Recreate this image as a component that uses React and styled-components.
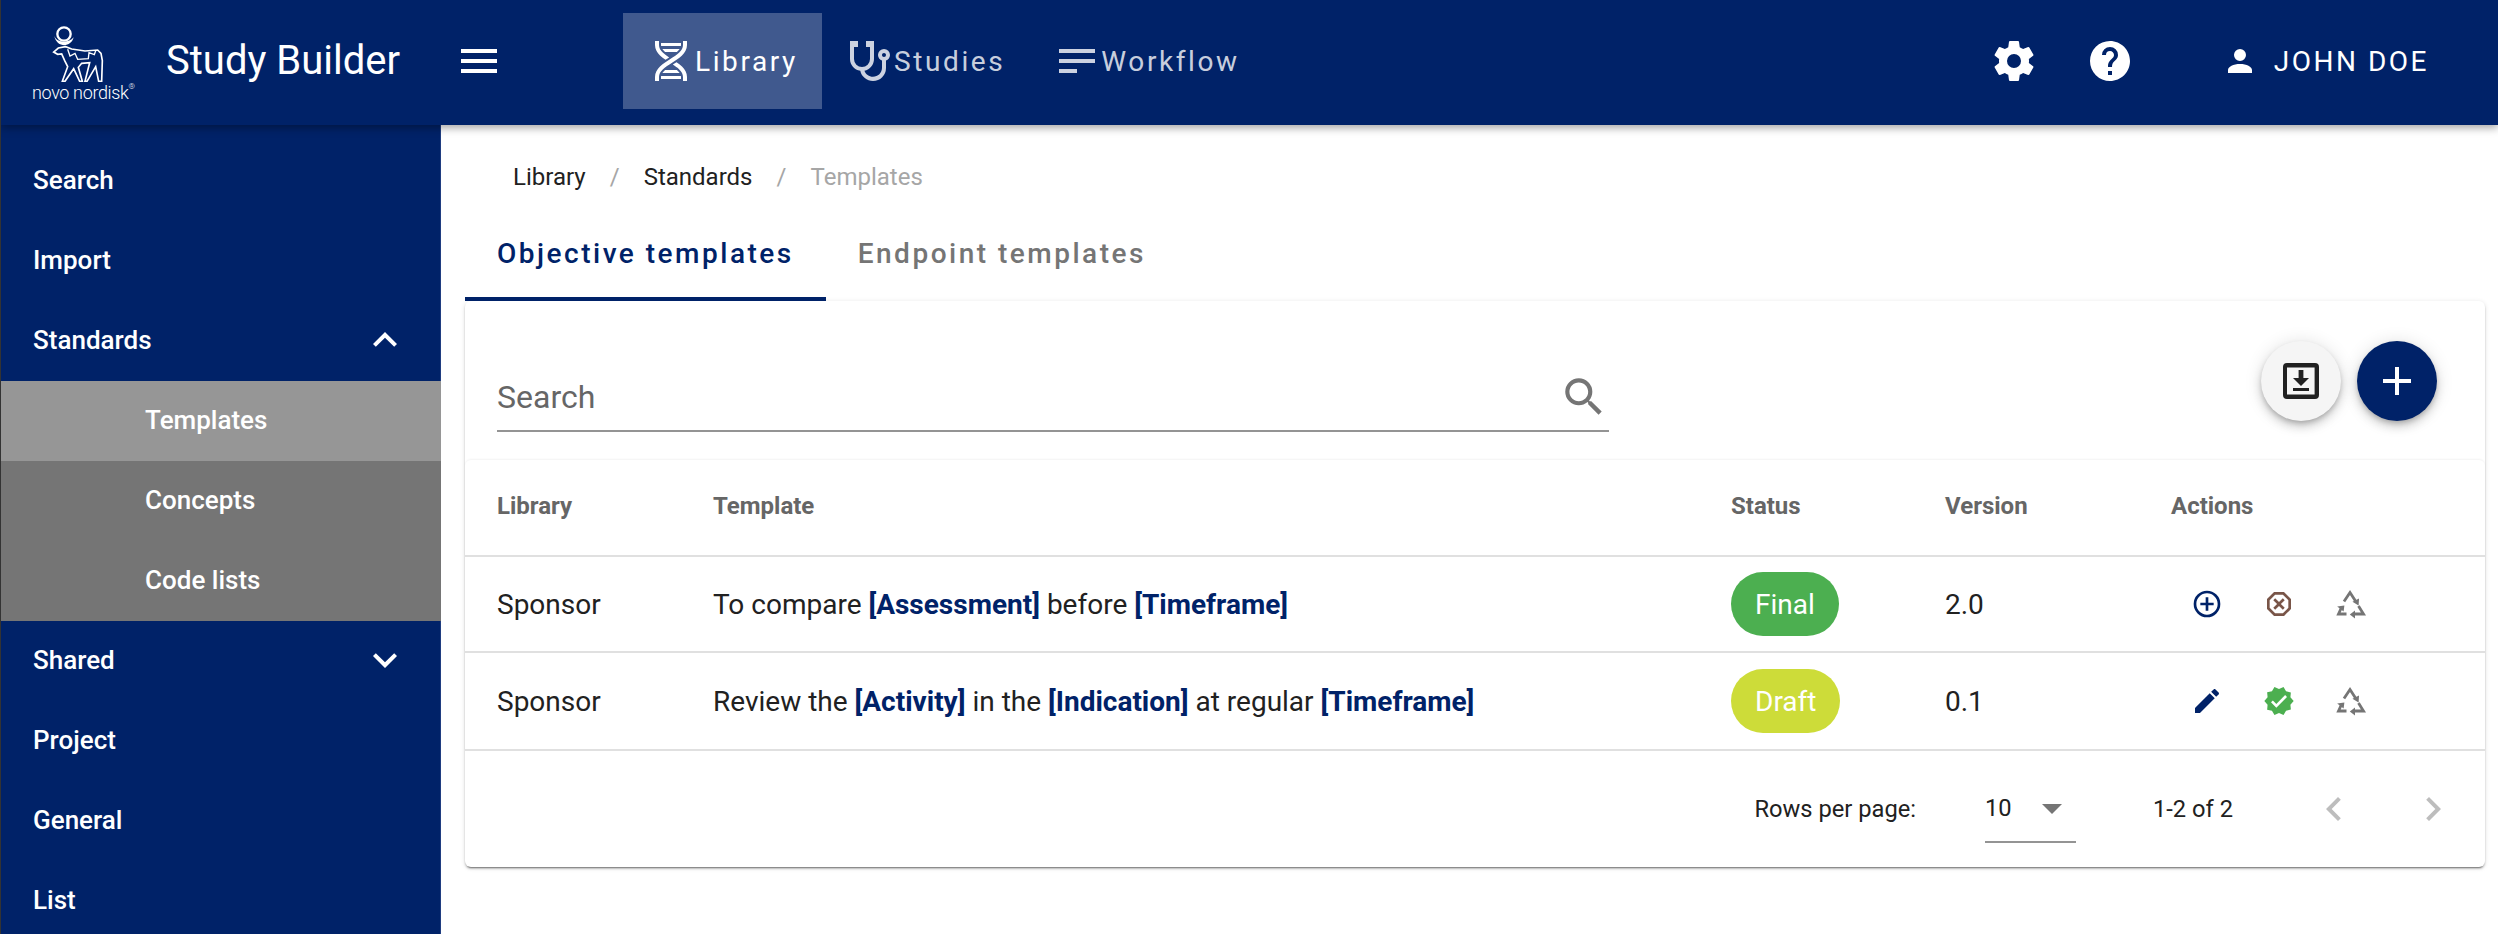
import React from "react";
import styled, { createGlobalStyle } from "styled-components";

const NAVY = "#002268";

const icons = {
  menu: "M3,6H21V8H3V6M3,11H21V13H3V11M3,16H21V18H3V16Z",
  dna: "M4,2H6V4C6,5.44 6.68,6.61 7.88,7.78C8.74,8.61 9.89,9.41 11.09,10.2L9.26,11.39C8.27,10.72 7.31,10 6.5,9.21C5.07,7.82 4,6.1 4,4V2M18,2H20V4C20,6.1 18.93,7.82 17.5,9.21C16.09,10.59 14.29,11.73 12.54,12.84C10.79,13.96 9.09,15.05 7.88,16.22C6.68,17.39 6,18.56 6,20V22H4V20C4,17.9 5.07,16.18 6.5,14.79C7.91,13.41 9.71,12.27 11.46,11.16C13.21,10.04 14.91,8.95 16.12,7.78C17.32,6.61 18,5.44 18,4V2M14.74,12.61C15.73,13.28 16.69,14 17.5,14.79C18.93,16.18 20,17.9 20,20V22H18V20C18,18.56 17.32,17.39 16.12,16.22C15.26,15.39 14.11,14.59 12.91,13.8L14.74,12.61M7,3H17V4L16.94,4.5H7.06L7,4V3M7.68,6H16.32C16.08,6.34 15.8,6.69 15.42,7.06L14.98,7.5H9.02L8.58,7.06C8.2,6.69 7.92,6.34 7.68,6M9.02,16.5H14.98L15.42,16.94C15.8,17.31 16.08,17.66 16.32,18H7.68C7.92,17.66 8.2,17.31 8.58,16.94L9.02,16.5M7.06,19.5H16.94L17,20V21H7V20L7.06,19.5Z",
  stethoscope: "M19,8C19.56,8 20,8.43 20,9A1,1 0 0,1 19,10C18.43,10 18,9.55 18,9C18,8.43 18.43,8 19,8M2,2V11C2,13.96 4.19,16.5 7.14,16.91C7.76,19.92 10.42,22 13.5,22A6.5,6.5 0 0,0 20,15.5V11.81C21.16,11.39 22,10.29 22,9A3,3 0 0,0 19,6A3,3 0 0,0 16,9C16,10.29 16.84,11.4 18,11.81V15.41C18,17.91 16,19.91 13.5,19.91C11.5,19.91 9.82,18.7 9.22,16.9C12,16.3 14,13.8 14,11V2H10V5H12V11A4,4 0 0,1 8,15A4,4 0 0,1 4,11V5H6V2H2Z",
  text: "M21,6V8H3V6H21M3,18H12V16H3V18M3,13H21V11H3V13Z",
  cog: "M12,15.5A3.5,3.5 0 0,1 8.5,12A3.5,3.5 0 0,1 12,8.5A3.5,3.5 0 0,1 15.5,12A3.5,3.5 0 0,1 12,15.5M19.43,12.97C19.47,12.65 19.5,12.33 19.5,12C19.5,11.67 19.47,11.34 19.43,11L21.54,9.37C21.73,9.22 21.78,8.95 21.66,8.73L19.66,5.27C19.54,5.05 19.27,4.96 19.05,5.05L16.56,6.05C16.04,5.66 15.5,5.32 14.87,5.07L14.5,2.42C14.46,2.18 14.25,2 14,2H10C9.75,2 9.54,2.18 9.5,2.42L9.13,5.07C8.5,5.32 7.96,5.66 7.44,6.05L4.95,5.05C4.73,4.96 4.46,5.05 4.34,5.27L2.34,8.73C2.21,8.95 2.27,9.22 2.46,9.37L4.57,11C4.53,11.34 4.5,11.67 4.5,12C4.5,12.33 4.53,12.65 4.57,12.97L2.46,14.63C2.27,14.78 2.21,15.05 2.34,15.27L4.34,18.73C4.46,18.95 4.73,19.03 4.95,18.95L7.44,17.94C7.96,18.34 8.5,18.68 9.13,18.93L9.5,21.58C9.54,21.82 9.75,22 10,22H14C14.25,22 14.46,21.82 14.5,21.58L14.87,18.93C15.5,18.67 16.04,18.34 16.56,17.94L19.05,18.95C19.27,19.03 19.54,18.95 19.66,18.73L21.66,15.27C21.78,15.05 21.73,14.78 21.54,14.63L19.43,12.97Z",
  help: "M15.07,11.25L14.17,12.17C13.45,12.89 13,13.5 13,15H11V14.5C11,13.39 11.45,12.39 12.17,11.67L13.41,10.41C13.78,10.05 14,9.55 14,9C14,7.89 13.1,7 12,7A2,2 0 0,0 10,9H8A4,4 0 0,1 12,5A4,4 0 0,1 16,9C16,9.88 15.64,10.67 15.07,11.25M13,19H11V17H13M12,2A10,10 0 0,0 2,12A10,10 0 0,0 12,22C17.53,22 22,17.5 22,12C22,6.47 17.5,2 12,2Z",
  account: "M12,4A4,4 0 0,1 16,8A4,4 0 0,1 12,12A4,4 0 0,1 8,8A4,4 0 0,1 12,4M12,14C16.42,14 20,15.79 20,18V20H4V18C4,15.79 7.58,14 12,14Z",
  chevronUp: "M7.41,15.41L12,10.83L16.59,15.41L18,14L12,8L6,14L7.41,15.41Z",
  chevronDown: "M7.41,8.58L12,13.17L16.59,8.58L18,10L12,16L6,10L7.41,8.58Z",
  chevronLeft: "M15.41,16.58L10.83,12L15.41,7.41L14,6L8,12L14,18L15.41,16.58Z",
  chevronRight: "M8.59,16.58L13.17,12L8.59,7.41L10,6L16,12L10,18L8.59,16.58Z",
  magnify: "M9.5,3A6.5,6.5 0 0,1 16,9.5C16,11.11 15.41,12.59 14.44,13.73L14.71,14H15.5L20.5,19L19,20.5L14,15.5V14.71L13.73,14.44C12.59,15.41 11.11,16 9.5,16A6.5,6.5 0 0,1 3,9.5A6.5,6.5 0 0,1 9.5,3M9.5,5C7,5 5,7 5,9.5C5,12 7,14 9.5,14C12,14 14,12 14,9.5C14,7 12,5 9.5,5Z",
  downloadBox: "M5,3H19A2,2 0 0,1 21,5V19A2,2 0 0,1 19,21H5A2,2 0 0,1 3,19V5A2,2 0 0,1 5,3M5,5.2V18.8H18.8V5.2H5M8,15.5H16V17H8V15.5M12,14.5L8,10.5H10.8V6.5H13.2V10.5H16L12,14.5Z",
  plus: "M19,13H13V19H11V13H5V11H11V5H13V11H19V13Z",
  plusCircle: "M12,20C7.59,20 4,16.41 4,12C4,7.59 7.59,4 12,4C16.41,4 20,7.59 20,12C20,16.41 16.41,20 12,20M12,2A10,10 0 0,0 2,12A10,10 0 0,0 12,22A10,10 0 0,0 22,12A10,10 0 0,0 12,2M13,7H11V11H7V13H11V17H13V13H17V11H13V7Z",
  closeOctagon: "M8.27,3L3,8.27V15.73L8.27,21H15.73C17.5,19.24 21,15.73 21,15.73V8.27L15.73,3M9.1,5H14.9L19,9.1V14.9L14.9,19H9.1L5,14.9V9.1M9.12,7.71L7.71,9.12L10.59,12L7.71,14.88L9.12,16.29L12,13.41L14.88,16.29L16.29,14.88L13.41,12L16.29,9.12L14.88,7.71L12,10.59",
  pencil: "M20.71,7.04C21.1,6.65 21.1,6 20.71,5.63L18.37,3.29C18,2.9 17.35,2.9 16.96,3.29L15.12,5.12L18.87,8.87M3,17.25V21H6.75L17.81,9.93L14.06,6.18L3,17.25Z",
  decagram: "M23,12L20.56,9.22L20.9,5.54L17.29,4.72L15.4,1.54L12,3L8.6,1.54L6.71,4.72L3.1,5.53L3.44,9.21L1,12L3.44,14.78L3.1,18.47L6.71,19.29L8.6,22.47L12,21L15.4,22.46L17.29,19.28L20.9,18.46L20.56,14.78L23,12M10,17L6,13L7.41,11.59L10,14.17L16.59,7.58L18,9L10,17Z",
  menuDown: "M7,10L12,15L17,10H7Z",
};

function App() {
  return (
    <Page>
      <GlobalStyle />
      {/* header */}
      <Header>
        <Brand>
          <BullLogo />
          <BrandName>
            novo nordisk<sup>®</sup>
          </BrandName>
        </Brand>
        <Title>Study Builder</Title>
        <MenuIcon>
          <Icon d={icons.menu} $size={48} />
        </MenuIcon>
        <TopNav>
          <TopNavButton $active>
            <Icon d={icons.dna} $size={48} />
            Library
          </TopNavButton>
          <TopNavButton>
            <Icon d={icons.stethoscope} $size={48} />
            Studies
          </TopNavButton>
          <TopNavButton>
            <Icon d={icons.text} $size={48} />
            Workflow
          </TopNavButton>
        </TopNav>
        <HeaderRight>
          <Icon d={icons.cog} $size={48} />
          <Icon d={icons.help} $size={48} />
          <UserButton>
            <Icon d={icons.account} $size={36} />
            JOHN DOE
          </UserButton>
        </HeaderRight>
      </Header>

      <Body>
        {/* sidebar */}
        <Sidebar>
          <SideItem>Search</SideItem>
          <SideItem>Import</SideItem>
          <SideItem>
            Standards
            <Icon d={icons.chevronUp} $size={48} />
          </SideItem>
          <SubItem $active>Templates</SubItem>
          <SubItem>Concepts</SubItem>
          <SubItem>Code lists</SubItem>
          <SideItem>
            Shared
            <Icon d={icons.chevronDown} $size={48} />
          </SideItem>
          <SideItem>Project</SideItem>
          <SideItem>General</SideItem>
          <SideItem>List</SideItem>
        </Sidebar>

        {/* main */}
        <Main>
          <Breadcrumbs>
            <Crumb>Library</Crumb>
            <CrumbSep>/</CrumbSep>
            <Crumb>Standards</Crumb>
            <CrumbSep>/</CrumbSep>
            <Crumb $current>Templates</Crumb>
          </Breadcrumbs>
          <Tabs>
            <Tab $active>Objective templates</Tab>
            <Tab>Endpoint templates</Tab>
          </Tabs>
          <Card>
            <Toolbar>
              <SearchField>
                <input placeholder="Search" />
                <Icon d={icons.magnify} $size={50} />
              </SearchField>
              <FabGroup>
                <Fab>
                  <Icon d={icons.downloadBox} $size={48} />
                </Fab>
                <Fab $primary>
                  <Icon d={icons.plus} $size={48} />
                </Fab>
              </FabGroup>
            </Toolbar>
            <Table>
              <HeadRow>
                <span>Library</span>
                <span>Template</span>
                <span>Status</span>
                <span>Version</span>
                <span>Actions</span>
              </HeadRow>
              <Row $height={94}>
                <span>Sponsor</span>
                <span>
                  To compare <Param>[Assessment]</Param> before <Param>[Timeframe]</Param>
                </span>
                <Chip $color="#4caf50">Final</Chip>
                <span>2.0</span>
                <Actions>
                  <ActionIcon d={icons.plusCircle} $color={NAVY} />
                  <ActionIcon d={icons.closeOctagon} $color="#795548" />
                  <RecycleIcon />
                </Actions>
              </Row>
              <Row $height={96}>
                <span>Sponsor</span>
                <span>
                  Review the <Param>[Activity]</Param> in the <Param>[Indication]</Param> at regular{" "}
                  <Param>[Timeframe]</Param>
                </span>
                <Chip $color="#cddc39">Draft</Chip>
                <span>0.1</span>
                <Actions>
                  <ActionIcon d={icons.pencil} $color={NAVY} />
                  <ActionIcon d={icons.decagram} $color="#4caf50" />
                  <RecycleIcon />
                </Actions>
              </Row>
            </Table>
            <Pagination>
              <PageText>Rows per page:</PageText>
              <RowsSelect>
                10
                <Icon d={icons.menuDown} $size={48} />
              </RowsSelect>
              <PageText>1-2 of 2</PageText>
              <PageArrows>
                <Icon d={icons.chevronLeft} $size={48} />
                <Icon d={icons.chevronRight} $size={48} />
              </PageArrows>
            </Pagination>
          </Card>
        </Main>
      </Body>
    </Page>
  );
}

function Icon({ d, $size, ...rest }) {
  return (
    <IconSvg viewBox="0 0 24 24" $size={$size} {...rest}>
      <path d={d} />
    </IconSvg>
  );
}

function ActionIcon({ d, $color }) {
  return (
    <ActionBox $color={$color}>
      <Icon d={d} $size={32} />
    </ActionBox>
  );
}

function RecycleIcon() {
  return (
    <ActionBox $color="#757575">
      <svg width="44" height="44" viewBox="0 0 44 44">
        <g fill="none" stroke="currentColor" strokeWidth="2.8">
          <path d="M15 19.5 L21 10.5 L26.5 19" />
          <path d="M17.5 32 H9.5 L12.5 25.5" />
          <path d="M29.5 24 L34.5 32 H25" />
        </g>
        <g fill="currentColor">
          <path d="M23.5 19.8 L30 16.5 L29.6 23.4 Z" />
          <path d="M8.2 24.6 L15.4 23.6 L14.6 29.6 Z" />
          <path d="M20.8 32.6 L26 28.6 L26 36.6 Z" />
        </g>
      </svg>
    </ActionBox>
  );
}

function BullLogo() {
  return (
    <svg width="115" height="62" viewBox="0 0 345 186">
      <g fill="none" stroke="#fff">
        <circle cx="117" cy="42" r="20" strokeWidth="7" />
        <path
          d="M122 80 L100 84 L86 96 L98 103 L110 102 L119 122 L128 140 L112 184 L120 184 L146 146 L164 184 L172 184 L160 142 L170 130 L194 128 L180 184 L186 184 L212 140 L221 184 L230 184 L232 122 L228 100 L218 90 L180 93 L140 87 Z"
          strokeWidth="5"
        />
        <path d="M128 88 L135 108 L150 100 L158 118 L190 116 L192 98 L208 104 L212 92" strokeWidth="4" />
      </g>
      <path d="M88 48 C95 68 130 72 146 52 C138 84 95 84 88 48 Z" fill="#fff" />
    </svg>
  );
}

const GlobalStyle = createGlobalStyle`
  html, body {
    margin: 0;
    padding: 0;
    background: #fff;
  }
  * {
    box-sizing: border-box;
  }
`;

const Page = styled.div`
  width: 2498px;
  height: 934px;
  overflow: hidden;
  display: flex;
  flex-direction: column;
  font-family: Roboto, "Liberation Sans", sans-serif;
  border-left: 1px solid #333;
`;

const IconSvg = styled.svg`
  width: ${(p) => p.$size}px;
  height: ${(p) => p.$size}px;
  flex: none;
  fill: currentColor;
`;

//header
const Header = styled.header`
  height: 125px;
  flex: none;
  display: flex;
  align-items: center;
  padding-bottom: 3px;
  background: ${NAVY};
  color: #fff;
  position: relative;
  z-index: 2;
  box-shadow: 0 3px 8px rgba(0, 0, 0, 0.35);
`;

const Brand = styled.div`
  align-self: flex-start;
  width: 165px;
  padding: 20px 0 0 24px;
  flex: none;
`;

const BrandName = styled.div`
  font-size: 18px;
  font-weight: 300;
  line-height: 20px;
  letter-spacing: -0.35px;
  margin: -3px 0 0 7px;
  white-space: nowrap;
  sup {
    font-size: 8px;
    line-height: 0;
    vertical-align: 10px;
  }
`;

const Title = styled.div`
  font-size: 40px;
  line-height: 48px;
  width: 289px;
  flex: none;
`;

const MenuIcon = styled.div`
  display: flex;
  width: 168px;
  flex: none;
`;

const TopNav = styled.nav`
  display: flex;
  height: 96px;
`;

const TopNavButton = styled.div`
  display: flex;
  align-items: center;
  padding: 0 24px;
  font-size: 28px;
  font-weight: 400;
  letter-spacing: 2.6px;
  color: ${(p) => (p.$active ? "#fff" : "rgba(255, 255, 255, 0.8)")};
  background: ${(p) => (p.$active ? "rgba(255, 255, 255, 0.25)" : "transparent")};
`;

const HeaderRight = styled.div`
  margin-left: auto;
  display: flex;
  align-items: center;
  gap: 48px;
  padding-right: 69px;
`;

const UserButton = styled.div`
  display: flex;
  align-items: center;
  gap: 16px;
  margin-left: 40px;
  font-size: 28px;
  font-weight: 400;
  letter-spacing: 2.5px;
`;

//sidebar
const Body = styled.div`
  flex: 1;
  display: flex;
  min-height: 0;
`;

const Sidebar = styled.aside`
  width: 440px;
  flex: none;
  padding-top: 16px;
  background: ${NAVY};
  box-shadow: inset -1px 0 0 #1f3d80;
  color: #fff;
`;

const SideItem = styled.div`
  height: 80px;
  padding-bottom: 2px;
  display: flex;
  align-items: center;
  justify-content: space-between;
  padding-left: 32px;
  padding-right: 32px;
  font-size: 26px;
  font-weight: 500;
`;

const SubItem = styled.div`
  height: 80px;
  padding-bottom: 2px;
  display: flex;
  align-items: center;
  padding-left: 144px;
  font-size: 26px;
  font-weight: 500;
  background: ${(p) => (p.$active ? "#969696" : "#757575")};
`;

//main
const Main = styled.main`
  flex: 1;
  min-width: 0;
  padding: 0 13px 0 24px;
`;

const Breadcrumbs = styled.div`
  display: flex;
  height: 82px;
  padding: 36px 0 14px 48px;
  font-size: 24px;
  line-height: 32px;
`;

const Crumb = styled.span`
  color: ${(p) => (p.$current ? "#a6a6a6" : "#212121")};
`;

const CrumbSep = styled.span`
  width: 58px;
  text-align: center;
  color: #a6a6a6;
`;

const Tabs = styled.div`
  display: flex;
  height: 94px;
`;

const Tab = styled.div`
  position: relative;
  display: flex;
  align-items: center;
  padding: 0 32px 2px;
  font-size: 28px;
  font-weight: 500;
  letter-spacing: 2.5px;
  color: ${(p) => (p.$active ? NAVY : "#757575")};
  ${(p) =>
    p.$active &&
    `&::after {
      content: "";
      position: absolute;
      left: 0;
      right: 0;
      bottom: 0;
      height: 4px;
      background: ${NAVY};
    }`}
`;

const Card = styled.section`
  height: 566px;
  border-radius: 6px;
  background: #fff;
  box-shadow: 0 3px 1px -2px rgba(0, 0, 0, 0.3), 0 2px 2px 0 rgba(0, 0, 0, 0.2),
    0 1px 5px 0 rgba(0, 0, 0, 0.12);
`;

const Toolbar = styled.div`
  height: 159px;
  display: flex;
  justify-content: space-between;
  padding: 0 48px 0 32px;
`;

const SearchField = styled.label`
  width: 1112px;
  height: 60px;
  margin-top: 71px;
  padding-bottom: 8px;
  display: flex;
  align-items: center;
  border-bottom: 2px solid #949494;
  color: #757575;
  input {
    flex: 1;
    min-width: 0;
    height: 100%;
    padding: 0;
    border: 0;
    outline: none;
    background: transparent;
    font: inherit;
    font-size: 32px;
  }
  input::placeholder {
    color: #666;
    opacity: 1;
  }
`;

const FabGroup = styled.div`
  display: flex;
  gap: 16px;
  margin-top: 40px;
`;

const Fab = styled.div`
  width: 80px;
  height: 80px;
  border-radius: 50%;
  display: flex;
  align-items: center;
  justify-content: center;
  background: ${(p) => (p.$primary ? NAVY : "#f5f5f5")};
  color: ${(p) => (p.$primary ? "#fff" : "#212121")};
  box-shadow: 0 3px 5px -1px rgba(0, 0, 0, 0.2), 0 6px 10px 0 rgba(0, 0, 0, 0.14),
    0 1px 18px 0 rgba(0, 0, 0, 0.12);
`;

//table
const Table = styled.div`
  border-radius: 6px 6px 0 0;
  box-shadow: 0 -1px 2px rgba(0, 0, 0, 0.05);
`;

const HeadRow = styled.div`
  display: grid;
  grid-template-columns: 216px 1018px 214px 226px 1fr;
  align-items: center;
  height: 97px;
  padding: 0 0 3px 32px;
  border-bottom: 2px solid #e0e0e0;
  font-size: 24px;
  font-weight: 700;
  color: #666;
`;

const Row = styled.div`
  display: grid;
  grid-template-columns: 216px 1018px 214px 226px 1fr;
  align-items: center;
  height: ${(p) => p.$height + 2}px;
  padding-left: 32px;
  border-bottom: 2px solid #e0e0e0;
  font-size: 28px;
  color: #212121;
`;

const Param = styled.b`
  font-weight: 700;
  color: ${NAVY};
`;

const Chip = styled.span`
  justify-self: start;
  height: 64px;
  padding: 0 24px;
  display: flex;
  align-items: center;
  border-radius: 32px;
  background: ${(p) => p.$color};
  color: #fff;
`;

const Actions = styled.div`
  display: flex;
  gap: 24px;
  margin-left: 12px;
`;

const ActionBox = styled.div`
  width: 48px;
  height: 48px;
  display: flex;
  align-items: center;
  justify-content: center;
  color: ${(p) => p.$color};
`;

//pagination
const Pagination = styled.div`
  height: 116px;
  display: flex;
  align-items: center;
  justify-content: flex-end;
  padding-right: 28px;
  font-size: 23.7px;
  color: #212121;
`;

const PageText = styled.span``;

const RowsSelect = styled.div`
  width: 91px;
  height: 68px;
  margin: 0 77px 0 69px;
  display: flex;
  align-items: center;
  justify-content: space-between;
  border-bottom: 2px solid #949494;
  svg {
    color: #757575;
  }
`;

const PageArrows = styled.div`
  display: flex;
  gap: 51px;
  margin-left: 77px;
  color: #bdbdbd;
`;

export default App;
